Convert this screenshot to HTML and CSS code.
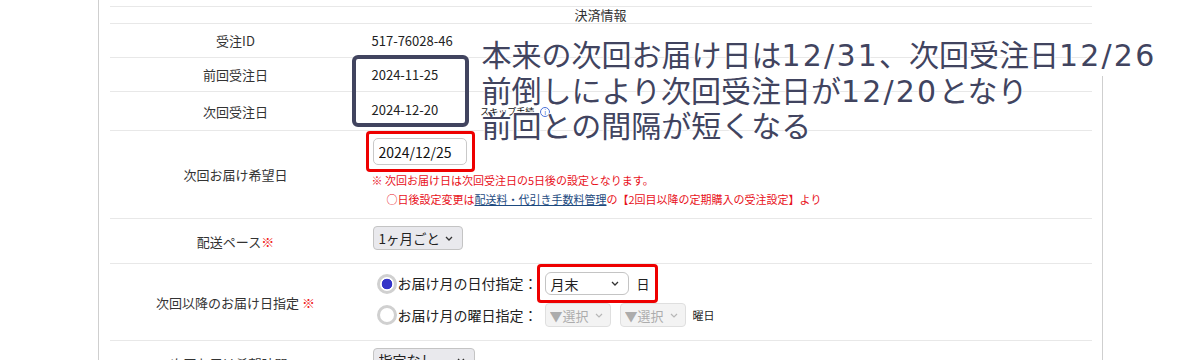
FILE: index.html
```html
<!DOCTYPE html>
<html lang="ja">
<head>
  <meta charset="UTF-8">
  <title>定期受注 編集</title>
  <link rel="stylesheet" href="styles.css">
</head>
<body>
  <div class="panel">
    <div class="form">
      <div class="row row-head">決済情報</div>

      <div class="row">
        <div class="label">受注ID</div>
        <div class="value">517-76028-46</div>
      </div>

      <div class="row">
        <div class="label">前回受注日</div>
        <div class="value">2024-11-25</div>
      </div>

      <div class="row">
        <div class="label">次回受注日</div>
        <div class="value value-next">2024-12-20<span class="memo">スキップ手続</span><span class="memo-icon">i</span></div>
      </div>

      <div class="row">
        <div class="label">次回お届け希望日</div>
        <div class="value value-wish">
          <span class="marked marked-input">
            <input type="text" class="date-input" value="2024/12/25">
          </span>
          <p class="notice">※ 次回お届け日は次回受注日の5日後の設定となります。</p>
          <p class="notice notice-sub">○日後設定変更は<a href="#">配送料・代引き手数料管理</a>の【2回目以降の定期購入の受注設定】より</p>
        </div>
      </div>

      <div class="row">
        <div class="label">配送ペース<span class="req">※</span></div>
        <div class="value value-select">
          <select class="select select-pace">
            <option>1ヶ月ごと</option>
          </select>
        </div>
      </div>

      <div class="row">
        <div class="label">次回以降のお届け日指定&nbsp;<span class="req">※</span></div>
        <div class="value value-radios">
          <div class="radio-line">
            <input type="radio" name="spec" class="radio" checked>
            <span class="radio-text">お届け月の日付指定：</span>
            <span class="marked marked-group">
              <select class="select select-day">
                <option>月末</option>
              </select>
              <span class="unit">日</span>
            </span>
          </div>
          <div class="radio-line">
            <input type="radio" name="spec" class="radio">
            <span class="radio-text">お届け月の曜日指定：</span>
            <select class="select select-week" disabled>
              <option>▼選択</option>
            </select>
            <select class="select select-week" disabled>
              <option>▼選択</option>
            </select>
            <span class="unit unit-small">曜日</span>
          </div>
        </div>
      </div>

      <div class="row">
        <div class="label">次回お届け希望時間<span class="req">※</span></div>
        <div class="value value-select">
          <select class="select select-time">
            <option>指定なし</option>
          </select>
        </div>
      </div>
    </div>

    <div class="mark-box"></div>
    <p class="callout">本来の次回お届け日は<span class="num">12/31</span>、次回受注日<span class="num">12/26</span><br>前倒しにより次回受注日が<span class="num">12/20</span>となり<br>前回との間隔が短くなる</p>
  </div>
</body>
</html>
```

FILE: styles.css
```css
html, body {
  height: 100%;
  overflow: hidden;
}

body {
  margin: 0;
  background: #fff;
  color: #333;
  font-family: "Noto Sans CJK JP", "Noto Sans", sans-serif;
  font-size: 13px;
}

.panel {
  position: relative;
  box-sizing: border-box;
  width: 1005px;
  min-height: 100%;
  margin: 0 auto;
  padding: 6px 11px 0 11px;
  border-left: 1px solid #cfcfcf;
}

/* right edge is hidden behind the callout near the top */
.panel::after {
  content: "";
  position: absolute;
  top: 76px;
  right: 0;
  bottom: 0;
  border-right: 1px solid #cfcfcf;
}

.row {
  display: grid;
  grid-template-columns: 252px 1fr;
  border-top: 1px solid #e8e8e8;
}

.row-head {
  display: block;
  text-align: center;
  line-height: 16px;
  color: #333;
}

.label {
  display: flex;
  align-items: center;
  justify-content: center;
  color: #333;
}

.req {
  color: #f02020;
}

.value {
  padding: 7px 10px;
  line-height: 19px;
  color: #222;
}

.value-next {
  padding: 8px 10px 9px;
}

.memo {
  margin-left: 42px;
  font-size: 9px;
  color: #111;
}

.memo-icon {
  display: inline-block;
  width: 8px;
  height: 8px;
  margin-left: 6px;
  border: 1px solid #4a6fd8;
  border-radius: 50%;
  font-size: 7px;
  line-height: 8px;
  text-align: center;
  color: #4a6fd8;
}

.value-wish {
  padding: 7px 10px 9px;
}

.marked {
  border: 3px solid #ee0000;
  border-radius: 4px;
}

.marked-input {
  display: block;
  width: 94px;
  margin: -7px 0 -7px -6px;
  padding: 4px 5px 4px 4px;
}

.date-input {
  display: block;
  box-sizing: border-box;
  width: 94px;
  height: 27px;
  margin: 0;
  padding: 0 5px;
  border: 1px solid #c9c9c9;
  border-radius: 5px;
  font-family: inherit;
  font-size: 14px;
  color: #111;
}

.notice {
  margin: 6px 0 0;
  font-size: 11px;
  line-height: 19px;
  color: #e8101a;
}

.notice-sub {
  margin: 0;
  padding-left: 15px;
}

.notice a {
  color: #1d4a80;
  text-decoration: underline;
}

.value-select {
  padding: 7px 10px 13px;
}

.select {
  appearance: none;
  box-sizing: border-box;
  height: 24px;
  padding: 0 20px 0 5px;
  border: 1px solid #c4c4c4;
  border-radius: 4px;
  background: #e9e9ed url("data:image/svg+xml,%3Csvg xmlns='http://www.w3.org/2000/svg' width='8' height='5' viewBox='0 0 8 5'%3E%3Cpath d='M1 1l3 3 3-3' fill='none' stroke='%23333' stroke-width='1.3'/%3E%3C/svg%3E") no-repeat right 9px center;
  font-family: inherit;
  font-size: 14px;
  color: #222;
}

.value-select .select {
  display: block;
  margin-left: 1px;
}

.select-pace {
  width: 90px;
  font-size: 13.5px;
}

.select-time {
  width: 102px;
}

.select-day {
  width: 84px;
  height: 23px;
  border-radius: 6px;
  background-color: #fff;
}

.select-week {
  width: 66px;
  margin-left: 9px;
  padding-left: 4px;
  border-color: #d2d2d2;
  background-color: #efefef;
  background-image: url("data:image/svg+xml,%3Csvg xmlns='http://www.w3.org/2000/svg' width='8' height='5' viewBox='0 0 8 5'%3E%3Cpath d='M1 1l3 3 3-3' fill='none' stroke='%23999' stroke-width='1.2'/%3E%3C/svg%3E");
  background-position: right 7px center;
  font-size: 13px;
  color: #8a8a8a;
}

.radio-text + .select-week {
  margin-left: 7px;
}

.value-radios {
  display: flex;
  flex-direction: column;
  gap: 6px;
  padding: 7px 10px 12px;
}

.radio-line {
  display: flex;
  align-items: center;
  height: 25px;
}

.radio-line + .radio-line {
  height: 26px;
}

.radio {
  appearance: none;
  box-sizing: border-box;
  width: 20px;
  height: 20px;
  margin: 0 1px 0 5px;
  border: 3px solid #d0d0d0;
  border-radius: 50%;
  background: #fff;
}

.radio:checked {
  background: radial-gradient(circle, #3434c8 0 5px, #fff 5.6px);
}

.radio-text {
  font-size: 14px;
  color: #222;
}

.marked-group {
  display: inline-flex;
  align-items: center;
  margin: -8px -8px -8px -1px;
  padding: 5px;
}

.unit {
  margin-left: 8px;
  font-size: 13px;
  color: #222;
}

.unit-small {
  margin-left: 7px;
  font-size: 11px;
}

.mark-box {
  position: absolute;
  top: 55px;
  left: 253px;
  box-sizing: border-box;
  width: 117px;
  height: 72px;
  border: 4px solid #41445f;
  border-radius: 6px;
}

.callout {
  position: absolute;
  top: 38px;
  left: 383px;
  margin: 0;
  font-family: "DejaVu Sans", "Noto Sans CJK JP", sans-serif;
  font-size: 30px;
  line-height: 35.5px;
  color: #41445f;
  white-space: nowrap;
  text-shadow: 0 2px 1px #fff, 0 -1px 1px #fff, 1px 0 1px #fff, -1px 0 1px #fff;
}

.callout .num {
  letter-spacing: 2.2px;
}
```
